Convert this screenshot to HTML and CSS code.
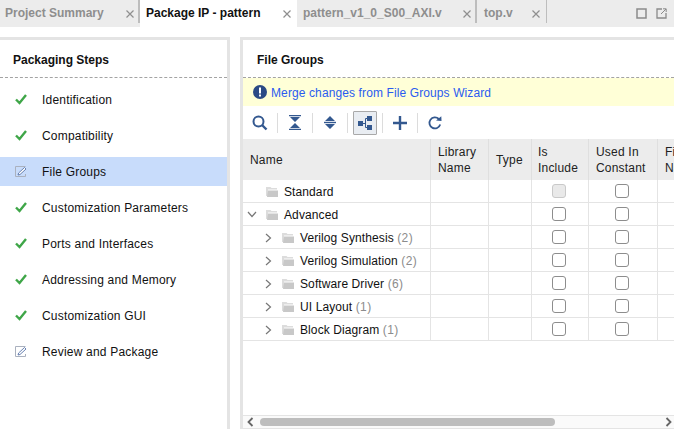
FILE: index.html
```html
<!DOCTYPE html>
<html lang="en">

<head>
  <meta charset="UTF-8" />
  <title>Package IP - pattern</title>
  <link rel="stylesheet" href="styles.css">
</head>

<body>
  <svg class="defs" width="0" height="0">
    <symbol id="check" viewBox="0 0 12 12">
      <path d="M1 5.5 L4.5 9 L11 1" fill="none" stroke="#3fa648" stroke-width="2.4" />
    </symbol>
    <symbol id="edit" viewBox="0 0 12 12">
      <path d="M.5 .5 H10.5 M.5 .5 V10.5 H10.5 V8" fill="none" stroke="#aab1be" />
      <path d="M3 9 L3.6 7 L9.5 1.5 L11 3 L5 8.5 Z" fill="#fff" stroke="#5874a8" stroke-width=".9" />
    </symbol>
    <symbol id="folder" viewBox="0 0 12 11">
      <path d="M0 1 H4.5 L5.5 2 H11 V3.5 H2 V10 H0 Z" fill="#dcdcdc" />
      <path d="M2 4.5 H12 V11 H1 Z" fill="#c8c8c8" />
    </symbol>
    <symbol id="close" viewBox="0 0 8 8">
      <path d="M.5 .5 L7.5 7.5 M7.5 .5 L.5 7.5" stroke="#8f8f8f" stroke-width="1.2" />
    </symbol>
    <symbol id="chev-right" viewBox="0 0 7 10">
      <path d="M1 1 L5.5 5 L1 9" fill="none" stroke="#777" stroke-width="1.2" />
    </symbol>
    <symbol id="chev-down" viewBox="0 0 10 7">
      <path d="M1 1 L5 5.5 L9 1" fill="none" stroke="#777" stroke-width="1.2" />
    </symbol>
  </svg>

  <div class="tabbar">
    <div class="tab tab-summary">
      <span class="tab-label">Project Summary</span>
      <svg class="tab-close"><use href="#close" /></svg>
    </div>
    <div class="tab-sep"></div>
    <div class="tab tab-package active">
      <span class="tab-label">Package IP - pattern</span>
      <svg class="tab-close"><use href="#close" /></svg>
    </div>
    <div class="tab tab-axi">
      <span class="tab-label">pattern_v1_0_S00_AXI.v</span>
      <svg class="tab-close"><use href="#close" /></svg>
    </div>
    <div class="tab-sep"></div>
    <div class="tab tab-top">
      <span class="tab-label">top.v</span>
      <svg class="tab-close"><use href="#close" /></svg>
    </div>
    <div class="tab-sep thin"></div>
    <div class="window-btns">
      <svg width="11" height="11" viewBox="0 0 11 11">
        <rect x="1" y="1" width="9" height="9" fill="none" stroke="#8a8a8a" stroke-width="1.5" />
      </svg>
      <svg width="11" height="11" viewBox="0 0 11 11">
        <path d="M6 1 H1 V10 H10 V5" fill="none" stroke="#8a8a8a" stroke-width="1.3" />
        <path d="M5 6 L10 1 M7 .8 H10.2 V4" fill="none" stroke="#8a8a8a" />
      </svg>
    </div>
  </div>

  <div class="workspace">
    <aside class="steps">
      <h2 class="panel-title">Packaging Steps</h2>
      <ul class="step-list">
        <li class="step"><svg class="step-icon"><use href="#check" /></svg>Identification</li>
        <li class="step"><svg class="step-icon"><use href="#check" /></svg>Compatibility</li>
        <li class="step selected"><svg class="step-icon"><use href="#edit" /></svg>File Groups</li>
        <li class="step"><svg class="step-icon"><use href="#check" /></svg>Customization Parameters</li>
        <li class="step"><svg class="step-icon"><use href="#check" /></svg>Ports and Interfaces</li>
        <li class="step"><svg class="step-icon"><use href="#check" /></svg>Addressing and Memory</li>
        <li class="step"><svg class="step-icon"><use href="#check" /></svg>Customization GUI</li>
        <li class="step"><svg class="step-icon"><use href="#edit" /></svg>Review and Package</li>
      </ul>
    </aside>

    <main class="groups">
      <h2 class="panel-title">File Groups</h2>
      <div class="notice">
        <svg width="14" height="14" viewBox="0 0 14 14">
          <circle cx="7" cy="7" r="7" fill="#2b4a85" />
          <rect x="6" y="2.5" width="2" height="6" fill="#fff" />
          <rect x="6" y="9.5" width="2" height="2" fill="#fff" />
        </svg>
        <span class="notice-link">Merge changes from File Groups Wizard</span>
      </div>

      <div class="toolbar">
        <button class="tool">
          <svg width="16" height="16" viewBox="0 0 16 16">
            <circle cx="6.5" cy="6.5" r="5" fill="none" stroke="#33588f" stroke-width="2" />
            <path d="M10 10 L14.5 14.5" stroke="#33588f" stroke-width="2.4" />
          </svg>
        </button>
        <span class="tool-sep"></span>
        <button class="tool">
          <svg width="14" height="15" viewBox="0 0 14 15">
            <path d="M1 .5 H13 M1 14.5 H13" stroke="#33588f" stroke-width="1.4" />
            <path d="M2 2 H12 L7 7 Z M2 13 H12 L7 8 Z" fill="#33588f" />
          </svg>
        </button>
        <span class="tool-sep"></span>
        <button class="tool">
          <svg width="14" height="15" viewBox="0 0 14 15">
            <path d="M1 7.5 H13" stroke="#33588f" stroke-width="1.4" />
            <path d="M2 6 H12 L7 1 Z M2 9 H12 L7 14 Z" fill="#33588f" />
          </svg>
        </button>
        <span class="tool-sep"></span>
        <button class="tool on">
          <svg width="14" height="14" viewBox="0 0 14 14">
            <rect x="0" y="5" width="5" height="5" fill="#33588f" />
            <rect x="9" y="0" width="5" height="5" fill="#33588f" />
            <rect x="9" y="9" width="5" height="5" fill="#33588f" />
            <path d="M5 7.5 H7.5 M9 2.5 H7.5 V11.5 H9" fill="none" stroke="#33588f" />
          </svg>
        </button>
        <span class="tool-sep"></span>
        <button class="tool">
          <svg width="14" height="14" viewBox="0 0 14 14">
            <path d="M7 0 V14 M0 7 H14" stroke="#33588f" stroke-width="2.4" />
          </svg>
        </button>
        <span class="tool-sep"></span>
        <button class="tool">
          <svg width="14" height="14" viewBox="0 0 14 14">
            <path d="M12.2 8.5 A5.5 5.5 0 1 1 10.8 3" fill="none" stroke="#33588f" stroke-width="1.8" />
            <path d="M8 4.6 L13.5 5 L13.3 .2 Z" fill="#33588f" />
          </svg>
        </button>
      </div>

      <div class="table-wrap">
        <table class="file-table">
          <colgroup>
            <col class="c-name" />
            <col class="c-lib" />
            <col class="c-type" />
            <col class="c-inc" />
            <col class="c-const" />
            <col class="c-file" />
          </colgroup>
          <thead>
            <tr>
              <th>Name</th>
              <th>Library<br />Name</th>
              <th>Type</th>
              <th class="th-inc">Is<br />Include</th>
              <th>Used In<br />Constant</th>
              <th>File<br />Name</th>
            </tr>
          </thead>
          <tbody>
            <tr>
              <td><div class="node lvl1"><span class="twist"></span><svg class="folder"><use href="#folder" /></svg>Standard</div></td>
              <td></td><td></td>
              <td class="mid"><span class="check disabled"></span></td>
              <td class="mid"><span class="check"></span></td>
              <td></td>
            </tr>
            <tr>
              <td><div class="node lvl1"><span class="twist"><svg class="chev-d"><use href="#chev-down" /></svg></span><svg class="folder"><use href="#folder" /></svg>Advanced</div></td>
              <td></td><td></td>
              <td class="mid"><span class="check"></span></td>
              <td class="mid"><span class="check"></span></td>
              <td></td>
            </tr>
            <tr>
              <td><div class="node lvl2"><span class="twist"><svg class="chev-r"><use href="#chev-right" /></svg></span><svg class="folder"><use href="#folder" /></svg>Verilog Synthesis&nbsp;<span class="count">(2)</span></div></td>
              <td></td><td></td>
              <td class="mid"><span class="check"></span></td>
              <td class="mid"><span class="check"></span></td>
              <td></td>
            </tr>
            <tr>
              <td><div class="node lvl2"><span class="twist"><svg class="chev-r"><use href="#chev-right" /></svg></span><svg class="folder"><use href="#folder" /></svg>Verilog Simulation&nbsp;<span class="count">(2)</span></div></td>
              <td></td><td></td>
              <td class="mid"><span class="check"></span></td>
              <td class="mid"><span class="check"></span></td>
              <td></td>
            </tr>
            <tr>
              <td><div class="node lvl2"><span class="twist"><svg class="chev-r"><use href="#chev-right" /></svg></span><svg class="folder"><use href="#folder" /></svg>Software Driver&nbsp;<span class="count">(6)</span></div></td>
              <td></td><td></td>
              <td class="mid"><span class="check"></span></td>
              <td class="mid"><span class="check"></span></td>
              <td></td>
            </tr>
            <tr>
              <td><div class="node lvl2"><span class="twist"><svg class="chev-r"><use href="#chev-right" /></svg></span><svg class="folder"><use href="#folder" /></svg>UI Layout&nbsp;<span class="count">(1)</span></div></td>
              <td></td><td></td>
              <td class="mid"><span class="check"></span></td>
              <td class="mid"><span class="check"></span></td>
              <td></td>
            </tr>
            <tr>
              <td><div class="node lvl2"><span class="twist"><svg class="chev-r"><use href="#chev-right" /></svg></span><svg class="folder"><use href="#folder" /></svg>Block Diagram&nbsp;<span class="count">(1)</span></div></td>
              <td></td><td></td>
              <td class="mid"><span class="check"></span></td>
              <td class="mid"><span class="check"></span></td>
              <td></td>
            </tr>
          </tbody>
        </table>
      </div>

      <div class="hscroll">
        <svg class="arrow" width="7" height="10" viewBox="0 0 7 10">
          <path d="M5.5 1 L1.5 5 L5.5 9" fill="none" stroke="#666" stroke-width="1.8" />
        </svg>
        <div class="thumb"></div>
        <svg class="arrow end" width="7" height="10" viewBox="0 0 7 10">
          <path d="M1.5 1 L5.5 5 L1.5 9" fill="none" stroke="#666" stroke-width="1.8" />
        </svg>
      </div>
    </main>
  </div>
</body>

</html>
```

FILE: styles.css
```css
* {
  box-sizing: border-box;
}

html,
body {
  margin: 0;
  height: 100%;
  overflow: hidden;
}

body {
  display: flex;
  flex-direction: column;
  font-family: "Liberation Sans", Arial, sans-serif;
  font-size: 12px;
  color: #111;
  background: white;
}

.defs {
  position: absolute;
}

/* tabs */
.tabbar {
  display: flex;
  height: 27px;
  background: #ececec;
  flex: none;
}

.tab {
  display: flex;
  align-items: center;
  justify-content: space-between;
  padding: 0 4px 1px 5px;
  color: #8e8e8e;
  font-weight: bold;
  white-space: nowrap;
}

.tab.active {
  background: white;
  color: #111;
}

.tab-summary {
  width: 138px;
}

.tab-package {
  width: 157px;
  padding-left: 6px;
  padding-right: 6px;
}

.tab-axi {
  width: 178px;
  padding-left: 6px;
}

.tab-top {
  width: 69px;
  padding-left: 7px;
  padding-right: 6px;
}

.tab-close {
  width: 8px;
  height: 8px;
  margin-top: 2px;
}

.tab-sep {
  width: 2px;
  height: 23px;
  background: #bdbdbd;
}

.tab-sep.thin {
  width: 1px;
}

.window-btns {
  display: flex;
  gap: 9px;
  margin-left: auto;
  margin-right: 7px;
  align-items: center;
  padding-bottom: 1px;
}

/* panels */
.workspace {
  flex: 1;
  display: flex;
  margin-top: 10px;
  min-height: 0;
}

.steps {
  width: 230px;
  flex: none;
  border-top: 3px solid #e4e4e4;
  border-right: 3px solid #e4e4e4;
}

.groups {
  flex: 1;
  min-width: 0;
  margin-left: 10px;
  display: flex;
  flex-direction: column;
  border-top: 3px solid #e4e4e4;
  border-left: 3px solid #e4e4e4;
}

.panel-title {
  margin: 0;
  height: 38px;
  padding: 13px 0 0 13px;
  font-size: 12px;
  font-weight: bold;
  color: #111;
  border-bottom: 1px dashed #a3a3a3;
}

.groups .panel-title {
  padding-left: 14px;
}

.step-list {
  list-style: none;
  margin: 7px 0 0;
  padding: 0;
  display: flex;
  flex-direction: column;
  gap: 7px;
  letter-spacing: .2px;
}

.step {
  display: flex;
  align-items: center;
  height: 29px;
  padding-left: 15px;
}

.step.selected {
  background: #c8dcfb;
}

.step-icon {
  width: 12px;
  height: 12px;
  margin-right: 15px;
}

/* notice + toolbar */
.notice {
  display: flex;
  align-items: center;
  gap: 4px;
  height: 28px;
  padding-left: 10px;
  background: #ffffd7;
}

.notice-link {
  color: #2a5cf0;
  letter-spacing: .11px;
  padding-top: 2px;
}

.toolbar {
  display: flex;
  align-items: center;
  height: 33px;
  padding-left: 5px;
  flex: none;
}

.tool {
  display: flex;
  align-items: center;
  justify-content: center;
  width: 24px;
  height: 24px;
  padding: 0;
  border: 1px solid transparent;
  border-radius: 1px;
  background: none;
}

.tool.on {
  background: #e9edf2;
  border-color: #a9a9a9;
}

.tool-sep {
  width: 1px;
  height: 20px;
  margin: 0 5px;
  background: #dcdcdc;
}

/* table */
.table-wrap {
  flex: 1;
  min-height: 0;
  overflow: hidden;
}

.file-table {
  table-layout: fixed;
  width: 471px;
  border-collapse: separate;
  border-spacing: 0;
}

.c-name {
  width: 188px;
}

.c-lib {
  width: 58px;
}

.c-type {
  width: 43px;
}

.c-inc {
  width: 57px;
}

.c-const {
  width: 69px;
}

.c-file {
  width: 56px;
}

.file-table th {
  height: 41px;
  padding: 1px 0 0 7px;
  background: #ececec;
  font-weight: normal;
  text-align: left;
  line-height: 16px;
  letter-spacing: .2px;
  border-right: 1px solid #dfdfdf;
  color: #222;
  white-space: nowrap;
  overflow: hidden;
}

.file-table th.th-inc {
  padding-left: 6px;
}

.file-table td {
  height: 23px;
  padding: 0;
  border-right: 1px solid #e4e4e4;
  border-bottom: 1px solid #e4e4e4;
}

.file-table td.mid {
  padding-right: 2px;
  text-align: center;
}

.node {
  display: flex;
  align-items: center;
  padding-top: 1px;
  letter-spacing: .1px;
  white-space: nowrap;
}

.lvl1 {
  padding-left: 4px;
}

.lvl2 {
  padding-left: 22px;
}

.twist {
  display: flex;
  align-items: center;
  width: 19px;
  height: 12px;
}

.lvl2 .twist {
  width: 17px;
}

.chev-r {
  width: 7px;
  height: 10px;
}

.chev-d {
  width: 10px;
  height: 7px;
}

.folder {
  width: 12px;
  height: 11px;
  margin-right: 6px;
}

.count {
  color: #8c8c8c;
  letter-spacing: .4px;
}

.check {
  display: block;
  width: 14px;
  height: 14px;
  margin: 0 auto;
  border: 1px solid #8d8d8d;
  border-radius: 3px;
  background: white;
}

.check.disabled {
  background: #e9e9e9;
  border-color: #c9c9c9;
}

/* bottom scrollbar */
.hscroll {
  display: flex;
  align-items: center;
  height: 14px;
  flex: none;
  padding: 0 2px 0 4px;
  background: #fafafa;
  border-top: 1px solid #e4e4e4;
  border-bottom: 1px solid #e4e4e4;
}

.thumb {
  width: 295px;
  height: 8px;
  margin-left: 6px;
  background: #bdbdbd;
  border-radius: 4px;
}

.arrow.end {
  margin-left: auto;
}
```
